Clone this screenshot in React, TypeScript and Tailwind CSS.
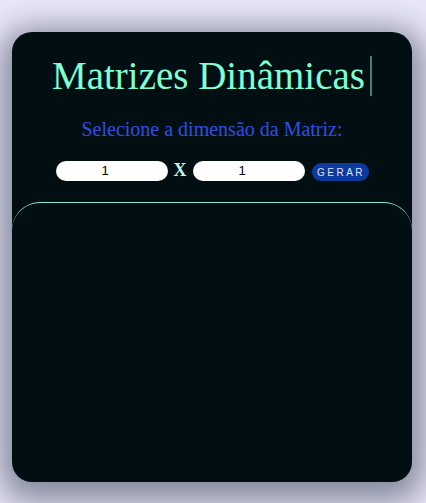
import React, { useState } from 'react';

const App = (): JSX.Element => {
  const [rows, setRows] = useState('1');
  const [cols, setCols] = useState('1');

  return (
    <div className="min-h-screen bg-[#e8e6f8] pt-8 pb-5 pl-3">
      <div className="w-[400px] h-[450px] rounded-[20px] bg-[#020f12] shadow-[0_8px_30px_12px_rgba(20,30,50,0.45)] flex flex-col overflow-hidden">
        <div className="pt-[24px] flex justify-center">
          <h1 className="font-['Liberation_Serif',serif] text-[39px] leading-[40px] text-[#7fffd4] border-r-2 border-[#4a7f7a] pr-[5px]">
            Matrizes Dinâmicas
          </h1>
        </div>
        <p className="mt-[20px] text-center font-['Liberation_Serif',serif] text-[20px] leading-[26px] text-[#2f4fe0]">
          Selecione a dimensão da Matriz:
        </p>
        <div className="mt-[18px] flex items-center justify-center gap-[6px]">
          <input
            type="text"
            value={rows}
            onChange={(e) => setRows(e.target.value)}
            className="w-[112px] h-[20px] rounded-full bg-white text-center pr-[13px] text-[13px] text-black font-['Liberation_Sans',sans-serif] outline-none"
          />
          <span className="font-['Liberation_Serif',serif] font-bold text-[18px] leading-none text-[#bff5ea] -mt-[2px]">
            X
          </span>
          <input
            type="text"
            value={cols}
            onChange={(e) => setCols(e.target.value)}
            className="w-[112px] h-[20px] rounded-full bg-white text-center pr-[13px] text-[13px] text-black font-['Liberation_Sans',sans-serif] outline-none"
          />
          <button className="ml-[1px] mt-[3px] h-[18px] w-[57px] rounded-full bg-[#0c3a9e] text-[10px] tracking-[2.5px] pl-[2px] text-[#dbe6ff] font-['Liberation_Sans',sans-serif]">
            GERAR
          </button>
        </div>
        <div className="mt-[21px] flex-1 border-t border-[#7fe8d8] rounded-t-[28px]"></div>
      </div>
    </div>
  );
};

export default App;
